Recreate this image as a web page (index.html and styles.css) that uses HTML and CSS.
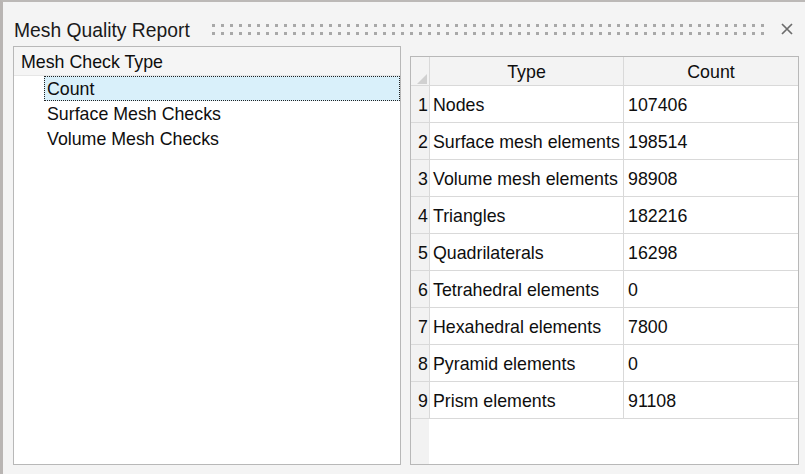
FILE: index.html
```html
<!DOCTYPE html>
<html>
<head>
<meta charset="utf-8">
<title>Mesh Quality Report</title>
<link rel="stylesheet" href="styles.css">
</head>
<body>
<div class="titlebar">
  <div class="title">Mesh Quality Report</div>
  <div class="grip"></div>
  <svg class="close" width="12" height="12" viewBox="0 0 12 12"><path d="M1 1 L11 11 M11 1 L1 11" stroke="#6c6c6c" stroke-width="1.7" fill="none"/></svg>
</div>
<div class="content">
  <div class="tree">
    <div class="tree-head">Mesh Check Type</div>
    <div class="tree-item selected">Count</div>
    <div class="tree-item">Surface Mesh Checks</div>
    <div class="tree-item">Volume Mesh Checks</div>
  </div>
  <div class="grid-wrap">
    <div class="grid">
      <div class="hcell corner"><svg width="10" height="10" viewBox="0 0 10 10"><path d="M10 0 L10 10 L0 10 Z" fill="#d0d0d0"/></svg></div>
      <div class="hcell">Type</div>
      <div class="hcell last">Count</div>

      <div class="num">1</div><div class="cell">Nodes</div><div class="cell last">107406</div>
      <div class="num">2</div><div class="cell">Surface mesh elements</div><div class="cell last">198514</div>
      <div class="num">3</div><div class="cell">Volume mesh elements</div><div class="cell last">98908</div>
      <div class="num">4</div><div class="cell">Triangles</div><div class="cell last">182216</div>
      <div class="num">5</div><div class="cell">Quadrilaterals</div><div class="cell last">16298</div>
      <div class="num">6</div><div class="cell">Tetrahedral elements</div><div class="cell last">0</div>
      <div class="num">7</div><div class="cell">Hexahedral elements</div><div class="cell last">7800</div>
      <div class="num">8</div><div class="cell">Pyramid elements</div><div class="cell last">0</div>
      <div class="num">9</div><div class="cell">Prism elements</div><div class="cell last">91108</div>
    </div>
  </div>
</div>
</body>
</html>
```
FILE: styles.css
```css
html, body {
  margin: 0;
  padding: 0;
}
body {
  box-sizing: border-box;
  width: 805px;
  height: 474px;
  overflow: hidden;
  background: #f4f4f4;
  border-top: 2px solid #bcb9b7;
  border-left: 3px solid #b9b5b3;
  font-family: "Liberation Sans", Arial, sans-serif;
  color: #0e0e0e;
}
.titlebar {
  display: flex;
  box-sizing: border-box;
  height: 40px;
  padding: 18px 12px 0 11px;
}
.title {
  font-size: 19.3px;
  line-height: 22px;
  white-space: nowrap;
  color: #1a1a1a;
}
.grip {
  flex: 1;
  height: 11px;
  margin: 4px 16px 0 22px;
  background: conic-gradient(from 90deg at 3px 3px, transparent 50%, #a8a8a8 0 75%, transparent 0) 0 0 / 9px 8px;
}
.close {
  margin-top: 3px;
  flex: none;
}
.content {
  display: flex;
  align-items: flex-start;
  padding-left: 10px;
  margin-top: 4px;
}
.tree {
  box-sizing: border-box;
  width: 388px;
  height: 419px;
  border: 1px solid #b8b8b8;
  background: #fff;
  font-size: 17.8px;
}
.tree-head {
  box-sizing: border-box;
  height: 29px;
  line-height: 26px;
  padding: 2px 0 0 7px;
  background: #f5f5f5;
  border-bottom: 1px solid #e6e6e6;
  white-space: nowrap;
}
.tree-item {
  box-sizing: border-box;
  height: 25px;
  line-height: 21px;
  margin-left: 30px;
  padding: 2px 0 0 2px;
  border: 1px solid transparent;
  white-space: nowrap;
}
.tree-item.selected {
  background: #d9f0fa;
  border: 1px dotted #222;
}
.grid-wrap {
  box-sizing: border-box;
  width: 389px;
  height: 409px;
  margin: 10px 0 0 9px;
  border: 1px solid #b8b8b8;
  background: linear-gradient(to right, #f2f2f2 18px, #ffffff 18px);
}
.grid {
  display: grid;
  grid-template-columns: 19px 194px 174px;
  grid-template-rows: 29px repeat(9, 37px);
  font-size: 17.8px;
}
.hcell {
  box-sizing: border-box;
  background: #f3f3f3;
  border-right: 1px solid #d9d9d9;
  border-bottom: 1px solid #d9d9d9;
  text-align: center;
  padding-top: 2px;
  line-height: 26px;
  white-space: nowrap;
}
.hcell.last {
  border-right: none;
}
.hcell.corner {
  display: flex;
  align-items: flex-end;
  justify-content: flex-end;
  padding: 0 2px 1px 0;
}
.num {
  box-sizing: border-box;
  background: #f2f2f2;
  border-right: 1px solid #d9d9d9;
  border-bottom: 1px solid #d9d9d9;
  text-align: right;
  padding: 2px 1px 0 0;
  line-height: 34px;
}
.cell {
  box-sizing: border-box;
  background: #fff;
  border-right: 1px solid #d9d9d9;
  border-bottom: 1px solid #d9d9d9;
  padding: 2px 0 0 3px;
  line-height: 34px;
  white-space: nowrap;
  overflow: hidden;
}
.cell.last {
  border-right: none;
  padding-left: 4px;
}
```
